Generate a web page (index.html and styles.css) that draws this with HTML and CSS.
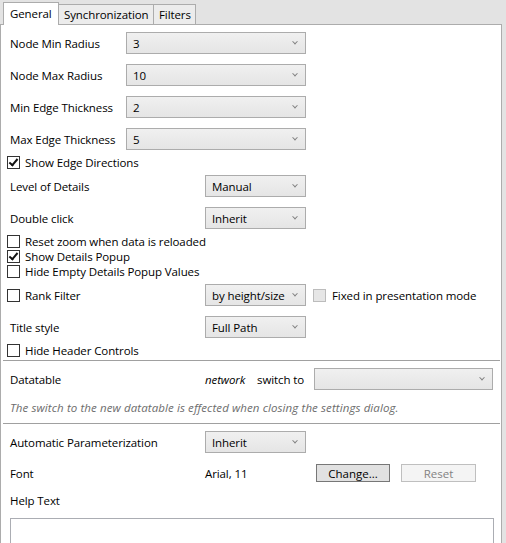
FILE: index.html
```html
<!DOCTYPE html>
<html>
<head>
<meta charset="utf-8">
<link rel="stylesheet" href="styles.css">
</head>
<body>
<div class="tabs">
  <div class="tab active">General</div>
  <div class="tab">Synchronization</div>
  <div class="tab">Filters</div>
</div>
<div class="panel">
  <div class="row"><span class="label">Node Min Radius</span><div class="select wide"><span>3</span><i class="chev"></i></div></div>
  <div class="row"><span class="label">Node Max Radius</span><div class="select wide"><span>10</span><i class="chev"></i></div></div>
  <div class="row"><span class="label">Min Edge Thickness</span><div class="select wide"><span>2</span><i class="chev"></i></div></div>
  <div class="row"><span class="label">Max Edge Thickness</span><div class="select wide"><span>5</span><i class="chev"></i></div></div>
  <div class="crow"><span class="cb checked"></span><span>Show Edge Directions</span></div>
  <div class="row"><span class="label mid">Level of Details</span><div class="select"><span>Manual</span><i class="chev"></i></div></div>
  <div class="row"><span class="label mid">Double click</span><div class="select"><span>Inherit</span><i class="chev"></i></div></div>
  <div class="crow"><span class="cb"></span><span>Reset zoom when data is reloaded</span></div>
  <div class="crow"><span class="cb checked"></span><span>Show Details Popup</span></div>
  <div class="crow"><span class="cb"></span><span>Hide Empty Details Popup Values</span></div>
  <div class="row"><span class="cb"></span><span class="cblabel">Rank Filter</span><div class="select"><span>by height/size</span><i class="chev"></i></div><span class="cb disabled"></span><span class="fixed">Fixed in presentation mode</span></div>
  <div class="row"><span class="label mid">Title style</span><div class="select"><span>Full Path</span><i class="chev"></i></div></div>
  <div class="crow"><span class="cb"></span><span>Hide Header Controls</span></div>
  <div class="sep"></div>
  <div class="row"><span class="label mid">Datatable</span><span class="net">network</span><span class="switch">switch to</span><div class="select dtsel"><span></span><i class="chev"></i></div></div>
  <div class="note">The switch to the new datatable is effected when closing the settings dialog.</div>
  <div class="sep"></div>
  <div class="row"><span class="label mid">Automatic Parameterization</span><div class="select"><span>Inherit</span><i class="chev"></i></div></div>
  <div class="frow"><span class="label mid">Font</span><span class="fontval">Arial, 11</span><button class="btn">Change...</button><button class="btn dis">Reset</button></div>
  <div class="help">Help Text</div>
  <div class="textarea"></div>
</div>
</body>
</html>
```
FILE: styles.css
```css
html, body {
  margin: 0;
  padding: 0;
}
body {
  background: #e3e3e3;
  font-family: "Open Sans", "Segoe UI", sans-serif;
  font-size: 11.5px;
  letter-spacing: -0.1px;
  color: #000;
  width: 506px;
  height: 543px;
  overflow: hidden;
}
.tabs {
  display: flex;
  align-items: flex-end;
  height: 24px;
  padding-left: 3px;
  position: relative;
  z-index: 2;
}
.tab {
  box-sizing: border-box;
  height: 20px;
  border: 1px solid #acacac;
  border-bottom: none;
  background: #ececec;
  padding: 0 5px 0 5px;
  line-height: 19px;
  margin-left: -1px;
}
.tab:nth-child(2) {
  width: 96px;
}
.tab:nth-child(3) {
  width: 43px;
}
.tab.active {
  height: 23px;
  background: #fff;
  margin-bottom: -1px;
  margin-left: 0;
  padding: 0 6px 0 6px;
  line-height: 22px;
  width: 56px;
}
.panel {
  box-sizing: border-box;
  width: 502px;
  height: 519px;
  background: #fff;
  border: 1px solid #acacac;
  border-bottom: none;
  padding-top: 2px;
  overflow: hidden;
}
.row {
  height: 32px;
  display: flex;
  align-items: center;
  padding-left: 9px;
}
.label {
  width: 116px;
  flex: none;
}
.label.mid {
  width: 195px;
}
.select {
  box-sizing: border-box;
  height: 22px;
  width: 101px;
  border: 1px solid #acacac;
  background: linear-gradient(#f0f0f0, #e5e5e5);
  display: flex;
  align-items: center;
  justify-content: space-between;
  padding: 0 8px 0 6px;
  flex: none;
}
.select.wide {
  width: 180px;
}
.chev {
  width: 3px;
  height: 3px;
  border-right: 1px solid #808080;
  border-bottom: 1px solid #808080;
  transform: rotate(45deg) translate(-1px, -1px);
}
.crow {
  height: 15px;
  line-height: 15px;
  display: flex;
  align-items: center;
  padding-left: 6px;
}
.cb {
  box-sizing: border-box;
  width: 13px;
  height: 13px;
  border: 1px solid #333;
  background: #fff;
  margin-right: 5px;
  flex: none;
  position: relative;
}
.cb.checked::after {
  content: "";
  position: absolute;
  left: 3px;
  top: 0px;
  width: 3px;
  height: 7px;
  border-right: 2px solid #111;
  border-bottom: 2px solid #111;
  transform: rotate(40deg);
}
.cb.disabled {
  background: #e6e6e6;
  border-color: #bcbcbc;
  margin-left: 7px;
}
.row .cb:first-child {
  margin-left: -3px;
}
.cblabel {
  width: 180px;
}
.fixed {
  margin-left: 1px;
}
.sep {
  height: 1px;
  background: #a0a0a0;
  margin: 2px 0 2px 2px;
  width: 497px;
}
.net {
  font-style: italic;
  width: 52px;
}
.switch {
  width: 57px;
}
.select.dtsel {
  width: 179px;
}
.note {
  height: 26px;
  line-height: 26px;
  padding-left: 9px;
  font-style: italic;
  letter-spacing: 0.1px;
  color: #6d6d6d;
}
.frow {
  height: 30px;
  display: flex;
  align-items: center;
  padding-left: 9px;
}
.fontval {
  width: 111px;
}
.btn {
  box-sizing: border-box;
  width: 74px;
  height: 18px;
  border: 1px solid #777;
  background: #e1e1e1;
  font: inherit;
  color: #000;
  padding: 0;
  margin-right: 11px;
}
.btn.dis {
  width: 75px;
  border-color: #bfbfbf;
  background: #f4f4f4;
  color: #838383;
}
.help {
  height: 26px;
  line-height: 26px;
  padding-left: 9px;
}
.textarea {
  box-sizing: border-box;
  margin: 4px 0 0 9px;
  width: 484px;
  height: 26px;
  border: 1px solid #abadb3;
  border-bottom: none;
  background: #fff;
}
```
